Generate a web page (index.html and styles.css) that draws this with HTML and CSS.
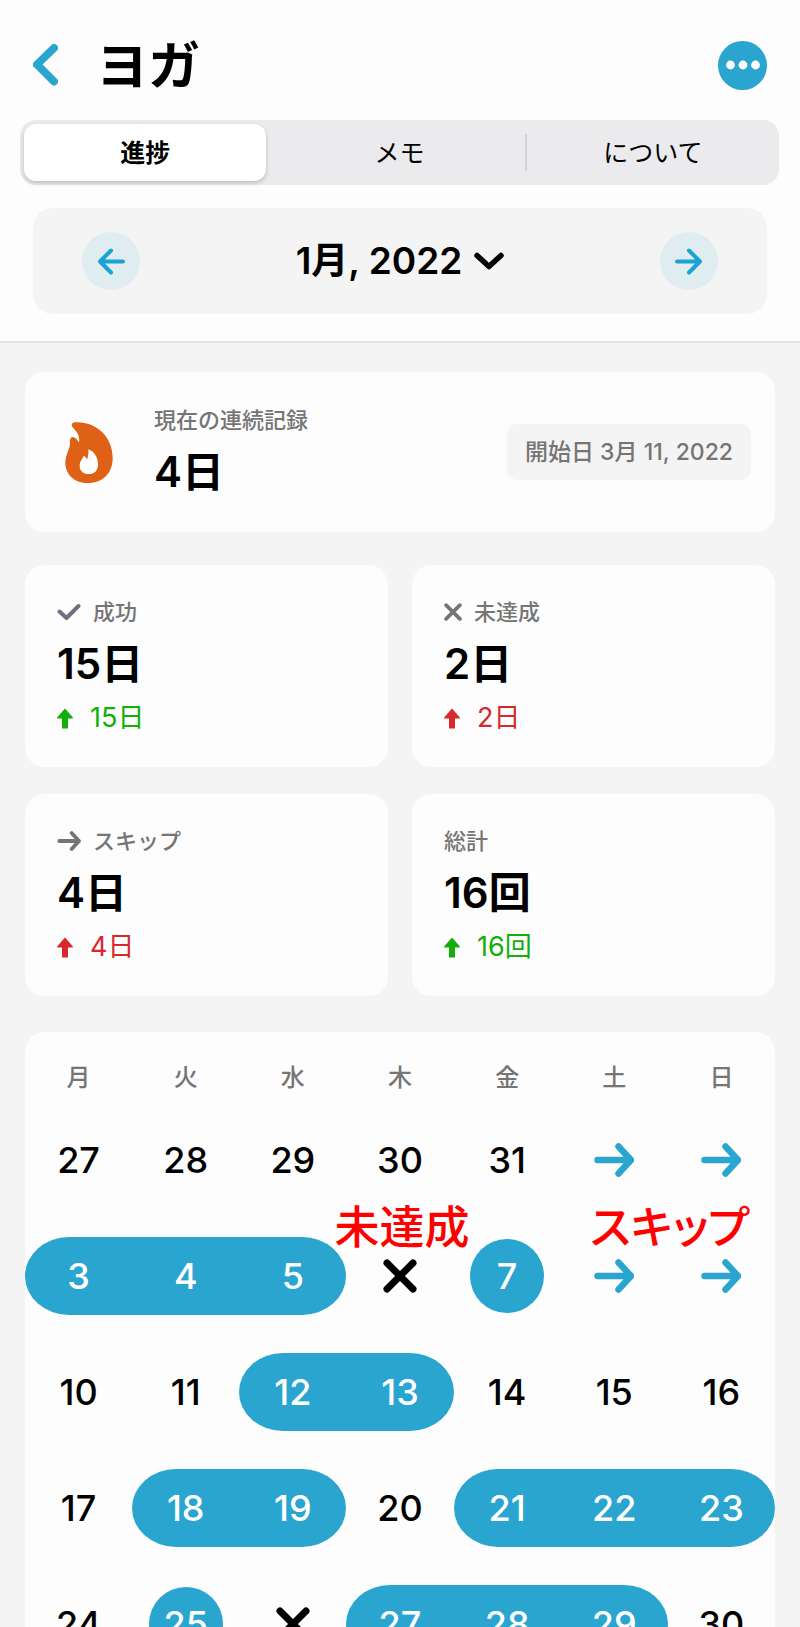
FILE: index.html
```html
<!DOCTYPE html>
<html lang="ja">
<head>
  <meta charset="UTF-8">
  <meta name="viewport" content="width=device-width, initial-scale=1">
  <title>ヨガ</title>
  <link rel="stylesheet" href="styles.css">
</head>
<body>
  <svg class="defs" aria-hidden="true">
    <symbol id="arrow" viewBox="0 0 40 34">
      <path d="M3.500 17H36M24.500 3.500L37 17L24.500 30.500" fill="none" stroke="currentColor" stroke-width="6.500" stroke-linecap="round" stroke-linejoin="round"/>
    </symbol>
    <symbol id="cross" viewBox="0 0 34 34">
      <path d="M4 4L30 30M30 4L4 30" fill="none" stroke="currentColor" stroke-width="7" stroke-linecap="round"/>
    </symbol>
    <symbol id="up" viewBox="0 0 16 21">
      <path d="M8 0.500L15.500 9Q16.500 10.500 15 10.500H11V20.500H5V10.500H1Q-0.500 10.500 0.500 9Z" fill="currentColor"/>
    </symbol>
  </svg>

  <div class="app">
    <header class="header">
      <div class="topbar">
        <button class="back" aria-label="戻る">
          <svg width="25" height="42" viewBox="0 0 25 42"><path d="M21 4L4 20.500L21 37.500" fill="none" stroke="currentColor" stroke-width="8" stroke-linecap="round" stroke-linejoin="round"/></svg>
        </button>
        <h1>ヨガ</h1>
        <button class="more" aria-label="メニュー">
          <svg width="34" height="10" viewBox="0 0 34 10" fill="#fff"><circle cx="4.500" cy="5" r="4.400"/><circle cx="17" cy="5" r="4.400"/><circle cx="29.500" cy="5" r="4.400"/></svg>
        </button>
      </div>

      <nav class="tabs">
        <button class="tab active">進捗</button>
        <button class="tab">メモ</button>
        <button class="tab">について</button>
      </nav>

      <div class="month">
        <button class="month-arrow" aria-label="前の月">
          <svg class="flip" width="27" height="27" viewBox="0 0 27 27"><path d="M2 13.500H25M14 2.500L25 13.500L14 24.500" fill="none" stroke="currentColor" stroke-width="4" stroke-linecap="round" stroke-linejoin="round"/></svg>
        </button>
        <button class="month-name">
          1月, 2022
          <svg width="30" height="18" viewBox="0 0 30 18"><path d="M3 3.500L15 14.500L27 3.500" fill="none" stroke="currentColor" stroke-width="5.500" stroke-linecap="round" stroke-linejoin="round"/></svg>
        </button>
        <button class="month-arrow" aria-label="次の月">
          <svg width="27" height="27" viewBox="0 0 27 27"><path d="M2 13.500H25M14 2.500L25 13.500L14 24.500" fill="none" stroke="currentColor" stroke-width="4" stroke-linecap="round" stroke-linejoin="round"/></svg>
        </button>
      </div>
    </header>

    <main class="content">
      <section class="card streak">
        <svg class="flame" width="48" height="61" viewBox="0 0 142 183">
          <path fill="#de6115" d="M30 1C90 -2 142 42 142 108C142 154 112 183 68 183C26 183 0 156 0 122C0 94 16 82 14 56C14 46 22 42 29 48C35 52 39 57 41 62C44 45 38 32 24 18C16 10 18 2 30 1Z"/>
          <path fill="#fff" d="M69 82C85 88 98 104 98 128C98 146 87 156 70 156C53 156 43 146 43 131C43 117 51 112 55 101C60 103 63 107 65 113C69 103 70 93 69 82Z"/>
        </svg>
        <div class="stat">
          <div class="label">現在の連続記録</div>
          <div class="value">4日</div>
        </div>
        <div class="since">開始日 3月 11, 2022</div>
      </section>

      <section class="stats">
        <div class="card stat">
          <div class="label">
            <svg width="24" height="18" viewBox="0 0 24 18"><path d="M2.500 8.500L9.500 15L21.500 3" fill="none" stroke="#6e7280" stroke-width="4" stroke-linecap="round" stroke-linejoin="round"/></svg>
            成功
          </div>
          <div class="value">15日</div>
          <div class="delta good"><svg width="16" height="21"><use href="#up"/></svg>15日</div>
        </div>
        <div class="card stat">
          <div class="label"><svg width="18" height="18"><use href="#cross"/></svg>未達成</div>
          <div class="value">2日</div>
          <div class="delta bad"><svg width="16" height="21"><use href="#up"/></svg>2日</div>
        </div>
        <div class="card stat">
          <div class="label"><svg width="24" height="20"><use href="#arrow"/></svg>スキップ</div>
          <div class="value">4日</div>
          <div class="delta bad"><svg width="16" height="21"><use href="#up"/></svg>4日</div>
        </div>
        <div class="card stat">
          <div class="label">総計</div>
          <div class="value">16回</div>
          <div class="delta good"><svg width="16" height="21"><use href="#up"/></svg>16回</div>
        </div>
      </section>

      <table class="card calendar">
        <thead>
          <tr><th>月</th><th>火</th><th>水</th><th>木</th><th>金</th><th>土</th><th>日</th></tr>
        </thead>
        <tbody>
          <tr>
            <td>27</td>
            <td>28</td>
            <td>29</td>
            <td>30</td>
            <td>31</td>
            <td class="skip"><svg width="40" height="34"><use href="#arrow"/></svg></td>
            <td class="skip"><svg width="40" height="34"><use href="#arrow"/></svg></td>
          </tr>
          <tr>
            <td><div class="run first">3</div></td>
            <td><div class="run">4</div></td>
            <td><div class="run last">5</div></td>
            <td><svg width="34" height="34"><use href="#cross"/></svg><span class="note">未達成</span></td>
            <td><div class="single">7</div></td>
            <td class="skip"><svg width="40" height="34"><use href="#arrow"/></svg><span class="note between">スキップ</span></td>
            <td class="skip"><svg width="40" height="34"><use href="#arrow"/></svg></td>
          </tr>
          <tr>
            <td>10</td>
            <td>11</td>
            <td><div class="run first">12</div></td>
            <td><div class="run last">13</div></td>
            <td>14</td>
            <td>15</td>
            <td>16</td>
          </tr>
          <tr>
            <td>17</td>
            <td><div class="run first">18</div></td>
            <td><div class="run last">19</div></td>
            <td>20</td>
            <td><div class="run first">21</div></td>
            <td><div class="run">22</div></td>
            <td><div class="run last">23</div></td>
          </tr>
          <tr>
            <td>24</td>
            <td><div class="single">25</div></td>
            <td><svg width="34" height="34"><use href="#cross"/></svg></td>
            <td><div class="run first">27</div></td>
            <td><div class="run">28</div></td>
            <td><div class="run last">29</div></td>
            <td>30</td>
          </tr>
        </tbody>
      </table>
    </main>
  </div>
</body>
</html>
```
FILE: styles.css
```css
* {
  box-sizing: border-box;
}
body {
  margin: 0;
  background: #f4f4f4;
  color: #000;
  font-family: Inter, "Noto Sans CJK JP", sans-serif;
}
button {
  border: none;
  padding: 0;
  background: none;
  color: inherit;
  font: inherit;
  cursor: pointer;
}
svg {
  display: block;
  flex: none;
}
.defs {
  position: absolute;
  width: 0;
  height: 0;
}
.app {
  display: flex;
  flex-direction: column;
  height: 100vh;
  overflow: hidden;
}

/* header */
.header {
  flex: none;
  background: #fdfdfd;
  border-bottom: 2px solid #e4e4e4;
  padding-bottom: 27px;
}
.topbar {
  display: flex;
  align-items: center;
  padding: 31px 33px 21px;
}
.back {
  color: #2aa5d0;
  margin-right: 38px;
}
h1 {
  flex: 1;
  margin: 0;
  padding-top: 4px;
  font-size: 52px;
  line-height: 64px;
  font-weight: 600;
}
.more {
  display: grid;
  place-items: center;
  width: 49px;
  height: 49px;
  border-radius: 50%;
  background: #2aa5d0;
}
.tabs {
  display: grid;
  grid-template-columns: repeat(3, 1fr);
  margin: 0 21px 0 20px;
  padding: 4px;
  height: 65px;
  border-radius: 16px;
  background: #ebebed;
}
.tab {
  font-size: 25px;
  line-height: 36px;
  font-weight: 400;
}
.tab + .tab + .tab {
  padding-left: 6px;
  background: linear-gradient(#d2d2d5, #d2d2d5) left center / 2px 37px no-repeat;
}
.tab.active {
  margin-right: 8px;
  border-radius: 12px;
  background: #fff;
  box-shadow: 0 2px 4px rgba(0, 0, 0, 0.2);
  font-weight: 600;
}
.month {
  display: flex;
  align-items: center;
  justify-content: space-between;
  margin: 23px 33px 0;
  padding: 0 49px;
  height: 106px;
  border-radius: 20px;
  background: #f4f4f4;
}
.month-arrow {
  display: grid;
  place-items: center;
  width: 58px;
  height: 58px;
  border-radius: 50%;
  background: #dfedf1;
  color: #1ba3d3;
}
.flip {
  transform: scaleX(-1);
}
.month-name {
  display: flex;
  align-items: center;
  gap: 12px;
  font-size: 37px;
  line-height: 54px;
  font-weight: 600;
}

/* cards */
.content {
  padding: 29px 25px;
}
.card {
  border-radius: 20px;
  background: #fdfdfd;
}
.streak {
  display: flex;
  align-items: center;
  height: 160px;
  padding: 0 24px 0 40px;
}
.flame {
  margin-right: 41px;
}
.since {
  margin-left: auto;
  padding: 0 18px;
  border-radius: 10px;
  background: #f4f4f4;
  color: #757575;
  font-size: 23px;
  line-height: 56px;
  font-weight: 500;
}
.stats {
  display: grid;
  grid-template-columns: 1fr 1fr;
  gap: 27px 24px;
  margin: 33px 0 36px;
}
.stats .card {
  padding: 32px 32px 32px;
}
.stat {
  display: flex;
  flex-direction: column;
  gap: 10px;
}
.label {
  display: flex;
  align-items: center;
  gap: 12px;
  color: #757575;
  font-size: 22px;
  line-height: 30px;
  font-weight: 500;
}
.value {
  font-size: 42px;
  line-height: 54px;
  font-weight: 600;
}
.delta {
  display: flex;
  align-items: center;
  gap: 17px;
  font-size: 27px;
  line-height: 34px;
  font-weight: 400;
}
.good {
  color: #12ae0b;
}
.bad {
  color: #d7282d;
}

/* calendar */
.calendar {
  width: 100%;
  table-layout: fixed;
  border-collapse: collapse;
  text-align: center;
}
.calendar th {
  height: 70px;
  padding: 22px 0 0;
  color: #757575;
  font-size: 24px;
  line-height: 36px;
  font-weight: 500;
}
.calendar td {
  position: relative;
  height: 116px;
  padding: 0;
  font-size: 36px;
  line-height: 78px;
  font-weight: 500;
}
.calendar td svg {
  margin: 0 auto;
}
.run {
  background: #2aa5d0;
  color: #fff;
}
.first {
  border-top-left-radius: 44px 39px;
  border-bottom-left-radius: 44px 39px;
}
.last {
  border-top-right-radius: 44px 39px;
  border-bottom-right-radius: 44px 39px;
}
.single {
  width: 74px;
  margin: 0 auto;
  border-radius: 50%;
  background: #2aa5d0;
  color: #fff;
  line-height: 74px;
}
.skip {
  color: #2aa5d0;
}

/* red captions over the calendar */
.note {
  position: absolute;
  top: -20px;
  left: 52%;
  transform: translateX(-50%);
  color: #f00;
  font-family: "Noto Sans CJK JP", sans-serif;
  font-size: 45px;
  line-height: 54px;
  font-weight: 500;
  font-feature-settings: "palt";
  white-space: nowrap;
}
.note.between {
  left: 102%;
}
```
